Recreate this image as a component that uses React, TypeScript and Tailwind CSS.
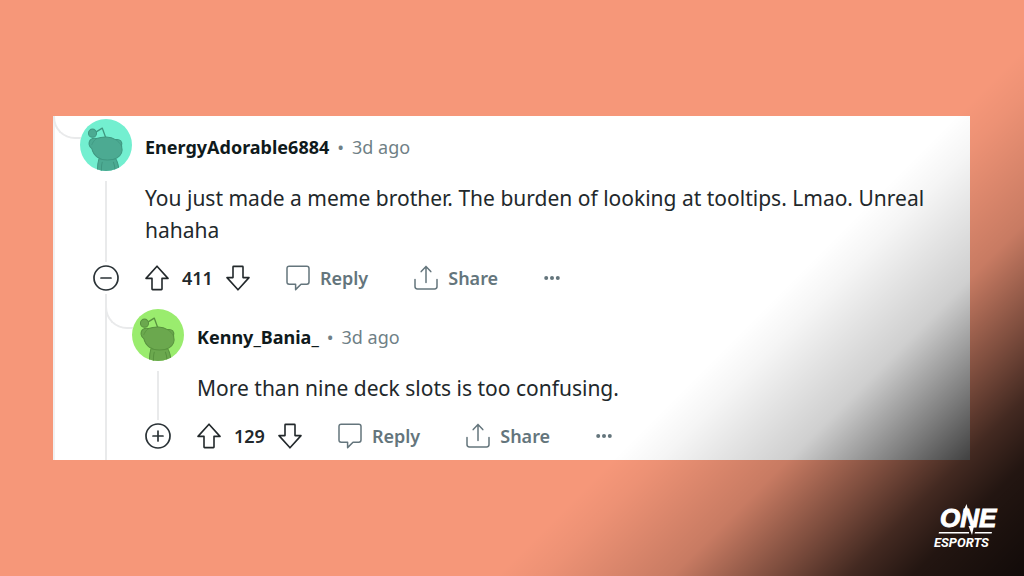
import React from 'react';
import type { ReactNode } from 'react';

type Tone = 'teal' | 'green';

interface CommentData {
    author: string;
    age: string;
    text: string;
    votes: number;
    tone: Tone;
    collapsed: boolean;
}

const parentComment: CommentData = {
    author: 'EnergyAdorable6884',
    age: '3d ago',
    text: 'You just made a meme brother. The burden of looking at tooltips. Lmao. Unreal hahaha',
    votes: 411,
    tone: 'teal',
    collapsed: false,
};

const replyComment: CommentData = {
    author: 'Kenny_Bania_',
    age: '3d ago',
    text: 'More than nine deck slots is too confusing.',
    votes: 129,
    tone: 'green',
    collapsed: true,
};

const avatarColors = {
    teal: { bg: '#73efd0', body: '#4caa92', line: '#3f9780' },
    green: { bg: '#9aec6e', body: '#6ba84e', line: '#58923f' },
};

const Avatar: React.FC<{ tone: Tone }> = ({ tone }) => {
    const c = avatarColors[tone];
    return (
        <div className="size-[52px] shrink-0 overflow-hidden rounded-full">
            <svg viewBox="0 0 154 154" className="size-full" aria-hidden="true">
                <rect width="154" height="154" fill={c.bg} />
                <g fill={c.body} stroke={c.line} strokeWidth="3" strokeLinejoin="round" strokeLinecap="round">
                    <path d="M56 118 C52 132 51 144 52 158 H116 C115 144 113 130 106 118 Z" />
                    <path d="M66 128 C63 138 63 146 64 154 M99 128 C103 138 104 146 103 154" fill="none" />
                    <path d="M48 38 L66 27 L76 55" fill="none" strokeWidth="4" />
                    <circle cx="37" cy="42" r="12" />
                    <path d="M27 76 C25 62 36 55 49 58 C66 51 90 51 105 61 C119 58 127 68 123 80 C127 94 123 107 110 115 C95 124 66 124 51 113 C42 106 37 97 35 88 C31 85 28 81 27 76 Z" />
                    <path d="M49 58 C43 62 38 68 35 76 M105 61 C113 65 119 72 123 80" fill="none" strokeWidth="2" />
                </g>
            </svg>
        </div>
    );
};

const UpArrow = ({ className = '' }: { className?: string }) => (
    <svg viewBox="0 0 24 26" className={`h-[26px] w-6 ${className}`} fill="none" stroke="currentColor" strokeWidth="1.6" strokeLinejoin="round" aria-hidden="true">
        <path d="M12 1.2 L23 13.4 H17 V24 Q17 24.6 16.4 24.6 H7.6 Q7 24.6 7 24 V13.4 H1 Z" />
    </svg>
);

const BubbleIcon = () => (
    <svg viewBox="0 0 24 26" className="h-[26px] w-6" fill="none" stroke="currentColor" strokeWidth="1.5" strokeLinejoin="round" aria-hidden="true">
        <path d="M3.2 1.2 H20.8 Q23 1.2 23 3.4 V17 Q23 19.2 20.8 19.2 H15 L9.6 24.6 V19.2 H3.2 Q1 19.2 1 17 V3.4 Q1 1.2 3.2 1.2 Z" />
    </svg>
);

const ShareIcon = () => (
    <svg viewBox="0 0 24 26" className="h-[26px] w-6" fill="none" stroke="currentColor" strokeWidth="1.5" strokeLinecap="round" strokeLinejoin="round" aria-hidden="true">
        <path d="M1 14.4 V21.6 Q1 24 3.4 24 H20.6 Q23 24 23 21.6 V14.4" />
        <path d="M12 17.6 V1.6 M7.2 6.6 L12 1.6 L16.8 6.6" />
    </svg>
);

const ToggleButton: React.FC<{ collapsed: boolean }> = ({ collapsed }) => (
    <button type="button" aria-label={collapsed ? 'Expand thread' : 'Collapse thread'} className="my-[3px] size-[26px] shrink-0 text-[#2a3236]">
        <svg viewBox="0 0 26 26" className="size-full" fill="none" stroke="currentColor" strokeWidth="1.7" strokeLinecap="round" aria-hidden="true">
            <circle cx="13" cy="13" r="12" />
            <path d="M8 13 H18" />
            {collapsed && <path d="M13 8 V18" />}
        </svg>
    </button>
);

const Action: React.FC<{ icon: ReactNode; label: string }> = ({ icon, label }) => (
    <button type="button" className="flex items-center gap-[10px]">
        {icon}
        <span>{label}</span>
    </button>
);

const Comment: React.FC<{ comment: CommentData }> = ({ comment }) => (
    <article className="flex gap-[13px]">
        <div className="flex w-[52px] shrink-0 flex-col items-center">
            <Avatar tone={comment.tone} />
            <div className="mt-[10px] w-[2px] flex-1 bg-[#e9eaeb]" />
            <ToggleButton collapsed={comment.collapsed} />
        </div>
        <div className="min-w-0 flex-1">
            <header className="flex h-14 items-center gap-2 text-[18px] text-[#6f7f86]">
                <a href="#" className="font-bold text-[#0f1a1c]">{comment.author}</a>
                <span>•</span>
                <time>{comment.age}</time>
            </header>
            <p className="mt-[7px] text-[21px] leading-8 text-[#22282b]">{comment.text}</p>
            <div className="mt-4 flex h-8 items-center text-[18px] font-semibold text-[#64757c]">
                <div className="flex items-center gap-[13px] text-[#22282b]">
                    <button type="button" aria-label="Upvote"><UpArrow /></button>
                    <span>{comment.votes}</span>
                    <button type="button" aria-label="Downvote"><UpArrow className="rotate-180" /></button>
                </div>
                <div className="ml-9 flex items-center gap-[46px]">
                    <Action icon={<BubbleIcon />} label="Reply" />
                    <Action icon={<ShareIcon />} label="Share" />
                    <button type="button" aria-label="More options">
                        <svg viewBox="0 0 16 6" className="h-[6px] w-4" fill="currentColor" aria-hidden="true">
                            <circle cx="2.2" cy="3" r="2" />
                            <circle cx="8" cy="3" r="2" />
                            <circle cx="13.8" cy="3" r="2" />
                        </svg>
                    </button>
                </div>
            </div>
        </div>
    </article>
);

const BrandLogo: React.FC = () => (
    <svg viewBox="0 0 68 48" className="h-12 w-[68px]" fill="#fff" role="img" aria-label="ONE Esports">
        <text x="8" y="25" fontFamily="'Liberation Sans', sans-serif" fontSize="26" fontWeight="700" fontStyle="italic" stroke="#fff" strokeWidth="1">ONE</text>
        <path d="M31 10 L34.5 2 L37.5 13 Z M36.5 24 L42 24 L40 33 Z" />
        <path d="M7 30 H37 V31.4 H6.6 Z M43 30 H60 L59.6 31.4 H42.6 Z" />
        <text x="2" y="45" fontFamily="Roboto, 'Liberation Sans', sans-serif" fontSize="13" fontWeight="700" fontStyle="italic">ESPORTS</text>
    </svg>
);

const App: React.FC = () => {
    return (
        <main className="relative min-h-screen bg-[#f69779] px-[53px] pt-[116px] pb-10 font-['Noto_Sans','Open_Sans',sans-serif]">
            <section className="relative mr-px overflow-hidden bg-white pt-[3px] pl-[27px]">
                <div className="absolute inset-y-0 left-0 border-l-2 border-[#f1f1f1]" />
                <div className="absolute -top-3 left-0 h-[35px] w-7 rounded-bl-[22px] border-b-2 border-l-2 border-[#e9eaeb]" />
                <Comment comment={parentComment} />
                <div className="relative ml-[25px] border-l-2 border-[#e9eaeb] pt-[15px] pb-2 pl-[25px]">
                    <div className="absolute top-0 -left-[2px] h-[35px] w-7 rounded-bl-[22px] border-b-2 border-l-2 border-[#e9eaeb]" />
                    <Comment comment={replyComment} />
                </div>
            </section>
            <div className="pointer-events-none absolute inset-0 bg-[linear-gradient(135deg,rgba(0,0,0,0)_67%,rgba(0,0,0,0.04)_70%,rgba(0,0,0,0.19)_78%,rgba(0,0,0,0.53)_85%,rgba(0,0,0,0.73)_89%,rgba(0,0,0,0.86)_93%,rgba(0,0,0,0.93)_100%)]" />
            <div className="absolute right-6 bottom-[26px]">
                <BrandLogo />
            </div>
        </main>
    );
};

export default App;
